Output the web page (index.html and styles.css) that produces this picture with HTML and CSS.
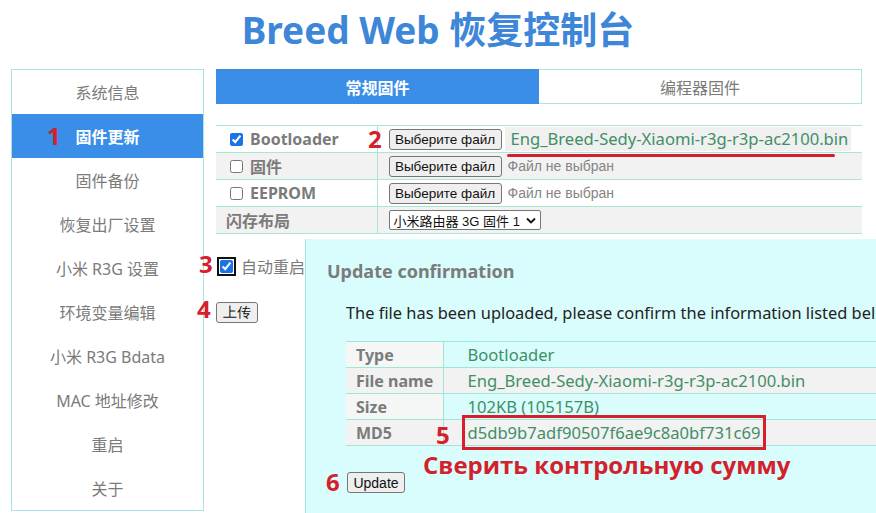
FILE: index.html
```html
<!DOCTYPE html>
<html lang="zh">
<head>
<meta charset="utf-8">
<title>Breed Web 恢复控制台</title>
<link rel="stylesheet" href="styles.css">
</head>
<body>
<h1 class="title">Breed Web 恢复控制台</h1>
<div class="layout">
  <nav class="sidebar">
    <a class="nav-item">系统信息</a>
    <a class="nav-item active">固件更新</a>
    <a class="nav-item">固件备份</a>
    <a class="nav-item">恢复出厂设置</a>
    <a class="nav-item">小米 R3G 设置</a>
    <a class="nav-item">环境变量编辑</a>
    <a class="nav-item">小米 R3G Bdata</a>
    <a class="nav-item">MAC 地址修改</a>
    <a class="nav-item">重启</a>
    <a class="nav-item">关于</a>
  </nav>
  <main class="main">
    <div class="tabs">
      <div class="tab tab-active">常规固件</div>
      <div class="tab">编程器固件</div>
    </div>
    <table class="fw-table">
      <tr>
        <th><label class="chk"><input type="checkbox" checked> Bootloader</label></th>
        <td><span class="file-btn">Выберите файл</span><span class="file-chosen">Eng_Breed-Sedy-Xiaomi-r3g-r3p-ac2100.bin</span></td>
      </tr>
      <tr class="alt">
        <th><label class="chk"><input type="checkbox"> 固件</label></th>
        <td><span class="file-btn">Выберите файл</span><span class="file-none">Файл не выбран</span></td>
      </tr>
      <tr>
        <th><label class="chk"><input type="checkbox"> EEPROM</label></th>
        <td><span class="file-btn">Выберите файл</span><span class="file-none">Файл не выбран</span></td>
      </tr>
      <tr class="alt">
        <th class="plain">闪存布局</th>
        <td><span class="select">小米路由器 3G 固件 1<svg class="chev" width="10" height="7" viewBox="0 0 10 7"><path d="M1 1.5 L5 5.5 L9 1.5" fill="none" stroke="#111" stroke-width="1.8"/></svg></span></td>
      </tr>
    </table>
    <div class="auto-row"><input class="auto-chk" type="checkbox" checked><span class="auto-label">自动重启</span></div>
    <span class="btn upload">上传</span>
  </main>
</div>

<section class="dialog">
  <h2 class="dlg-title">Update confirmation</h2>
  <p class="dlg-text">The file has been uploaded, please confirm the information listed below before updating.</p>
  <table class="info">
    <tr><th>Type</th><td>Bootloader</td></tr>
    <tr class="alt"><th>File name</th><td>Eng_Breed-Sedy-Xiaomi-r3g-r3p-ac2100.bin</td></tr>
    <tr><th>Size</th><td>102KB (105157B)</td></tr>
    <tr class="alt"><th>MD5</th><td><span class="md5">d5db9b7adf90507f6ae9c8a0bf731c69</span></td></tr>
  </table>
  <span class="btn update">Update</span>
</section>

<div class="mark n1">1</div>
<div class="mark n2">2</div>
<div class="mark n3">3</div>
<div class="mark n4">4</div>
<div class="mark n5">5</div>
<div class="mark n6">6</div>
<div class="underline"></div>
<div class="mark note">Сверить контрольную сумму</div>
</body>
</html>
```
FILE: styles.css
```css
* { box-sizing: border-box; }
body {
  margin: 0;
  width: 876px;
  height: 513px;
  overflow: hidden;
  position: relative;
  background: #fff;
  font-family: "Noto Sans", "Noto Sans CJK SC", sans-serif;
  color: #777;
}
.title {
  margin: 0;
  height: 69px;
  line-height: 60px;
  text-align: center;
  font-size: 37px;
  font-weight: 700;
  color: #3d86d8;
}
.layout {
  display: flex;
  padding-left: 11px;
  gap: 12px;
}
.sidebar {
  width: 193px;
  height: 442px;
  border: 1px solid #a9e2e8;
  display: flex;
  flex-direction: column;
}
.nav-item {
  height: 44px;
  display: flex;
  align-items: center;
  justify-content: center;
  font-size: 16px;
  color: #7b7b7b;
}
.nav-item.active {
  background: #3a8ee8;
  color: #fff;
  font-weight: 700;
}
.main {
  width: 646px;
  white-space: nowrap;
}
.tabs {
  display: flex;
  height: 35px;
  border: 1px solid #a8e6e0;
}
.tab {
  flex: 1;
  display: flex;
  align-items: center;
  justify-content: center;
  font-size: 16px;
  color: #7b7b7b;
}
.tab-active {
  flex: 0 0 323px;
  margin: -1px 0 -1px -1px;
  background: #3a8ee8;
  color: #fff;
  font-weight: 700;
}
.fw-table {
  margin-top: 21px;
  width: 646px;
  border-collapse: collapse;
}
.fw-table tr { border-top: 1px solid #a8e6d8; border-bottom: 1px solid #a8e6d8; }
.fw-table tr.alt { background: #f2f2f2; }
.fw-table th {
  width: 161px;
  height: 26px;
  padding: 0 0 0 10px;
  text-align: left;
  border-right: 1px solid #a8e6d8;
  font-size: 16px;
  font-weight: 700;
  color: #7b7b7b;
}
.fw-table td {
  height: 26px;
  padding: 0 0 0 11px;
  display: flex;
  align-items: center;
}
.chk { display: flex; align-items: center; gap: 4px; }
.chk input { margin: 0 3px 0 4px; width: 13px; height: 13px; accent-color: #1a73e8; }
.file-btn, .btn {
  display: inline-flex;
  align-items: center;
  justify-content: center;
  height: 21px;
  padding: 0 6px;
  border: 1px solid #767676;
  border-radius: 3px;
  background: #efefef;
  font-family: "Liberation Sans", Arial, sans-serif;
  font-size: 14px;
  color: #111;
  white-space: nowrap;
}
.file-btn { width: 113px; padding: 0; font-size: 13.5px; }
.file-chosen {
  margin-left: 3px;
  padding: 0 3px 0 6px;
  background: #f0f0f0;
  line-height: 24px;
  font-size: 16.6px;
  color: #3f8f67;
}
.file-none {
  margin-left: 6px;
  font-family: "Liberation Sans", Arial, sans-serif;
  font-size: 14px;
  color: #858585;
}
.select {
  display: inline-flex;
  align-items: center;
  justify-content: space-between;
  width: 152px;
  height: 20px;
  padding: 0 4px 0 4px;
  border: 1px solid #767676;
  border-radius: 2px;
  background: #fff;
  font-family: "Liberation Sans", "Noto Sans CJK SC", sans-serif;
  font-size: 13px;
  color: #111;
  white-space: nowrap;
}
.auto-row {
  margin-top: 22px;
  height: 20px;
  display: flex;
  align-items: center;
}
.auto-chk {
  margin: 0 0 0 4px;
  width: 13px;
  height: 13px;
  accent-color: #1a73e8;
  outline: 2px solid #101010;
  outline-offset: 1px;
  border-radius: 2px;
}
.auto-label { margin-left: 8px; font-size: 16px; color: #7b7b7b; }
.upload { margin-top: 26px; height: 21px; }

.dialog {
  position: absolute;
  left: 305px;
  top: 239px;
  right: 0;
  bottom: 0;
  background: #d8fdfc;
  border-left: 1px solid #a0e6dc;
  overflow: hidden;
  white-space: nowrap;
}
.dlg-title {
  margin: 20px 0 0 21px;
  line-height: 24px;
  font-size: 18px;
  font-weight: 700;
  color: #7b7b7b;
}
.dlg-text {
  margin: 18px 0 0 40px;
  line-height: 24px;
  font-size: 16.4px;
  color: #222;
}
.info {
  margin: 16px 0 0 40px;
  width: 560px;
  border-collapse: collapse;
}
.info tr { border-top: 1px solid #a0e6d4; border-bottom: 1px solid #a0e6d4; }
.info tr.alt { background: #f2f2f2; }
.info th {
  width: 97px;
  height: 26px;
  padding: 0 0 0 10px;
  text-align: left;
  background: #f4f7f5;
  border-right: 1px solid #a0e6d4;
  font-size: 16px;
  font-weight: 700;
  color: #7b7b7b;
}
.info tr.alt th { background: #f2f2f2; }
.info td {
  height: 26px;
  padding: 0 0 0 24px;
  font-size: 16.6px;
  color: #3f8f67;
}
.md5 {
  outline: 3px solid #d7202c;
  outline-offset: 3px;
}
.update { display: flex; width: 58px; margin: 26px 0 0 41px; height: 21px; }

.mark {
  position: absolute;
  font-family: "Open Sans", sans-serif;
  font-weight: 700;
  font-size: 24px;
  line-height: 24px;
  color: #d41f2d;
}
.n1 { left: 47px; top: 124px; }
.n2 { left: 368px; top: 127px; }
.n3 { left: 199px; top: 252px; }
.n4 { left: 197px; top: 297px; }
.n5 { left: 436px; top: 423px; }
.n6 { left: 326px; top: 470px; }
.note { left: 423px; top: 453px; font-size: 24px; }
.underline {
  position: absolute;
  left: 507px;
  top: 154px;
  width: 328px;
  height: 3px;
  border-radius: 2px;
  background: #d41f2d;
}
```
